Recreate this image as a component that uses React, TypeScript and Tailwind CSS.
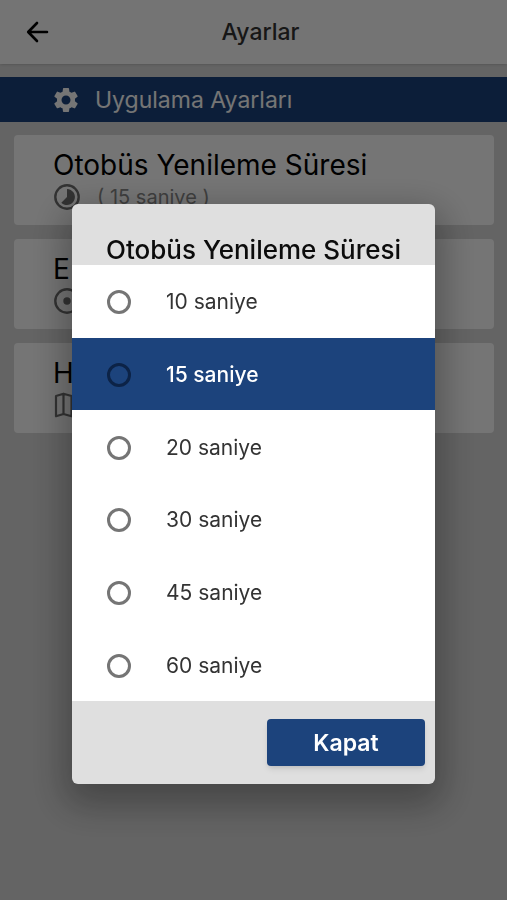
import React, { useState } from 'react';
import { MdSettings } from 'react-icons/md';

const options = [10, 15, 20, 30, 45, 60];

function ArrowIcon() {
  return (
    <svg viewBox="0 0 24 24" className="w-6 h-6" fill="none" stroke="currentColor" strokeWidth="2.6" strokeLinecap="round" strokeLinejoin="round">
      <path d="M22 12H4M12 3L3.200 12l8.800 9" />
    </svg>
  );
}

function TimelapseIcon() {
  return (
    <svg viewBox="0 0 28 28" className="w-7 h-7" fill="none">
      <circle cx="14" cy="14" r="11.700" stroke="currentColor" strokeWidth="2.4" />
      <path d="M14 6a8 8 0 1 1-5.700 13.700L14 14z" fill="currentColor" />
    </svg>
  );
}

function AdjustIcon() {
  return (
    <svg viewBox="0 0 28 28" className="w-7 h-7" fill="none">
      <circle cx="14" cy="14" r="11.700" stroke="currentColor" strokeWidth="2.4" />
      <circle cx="14" cy="14" r="3.700" fill="currentColor" />
    </svg>
  );
}

function MapIcon() {
  return (
    <svg viewBox="0 0 28 28" className="w-7 h-7" fill="none" stroke="currentColor" strokeWidth="2.2" strokeLinejoin="round">
      <path d="M3 5l7.500-2.300 8 2.300L26 2.700v20.300l-7.500 2.300-8-2.300L3 25.300zM10.500 2.700v20.300M18.500 5v20.300" />
    </svg>
  );
}

function SettingCard({ title, icon, value }: { title: string; icon: React.ReactNode; value?: string }) {
  return (
    <div className="bg-white rounded min-h-[90px] pl-[39px] pt-3">
      <h2 className="text-[28px] leading-9 text-black">{title}</h2>
      <div className="flex items-center gap-4 h-7 text-[#6f6f6f]">
        {icon}
        {value && <span className="text-[20px] leading-7 text-[#8a8a8a]">{value}</span>}
      </div>
    </div>
  );
}

export default function App() {
  const [selected, setSelected] = useState(15);
  const [open, setOpen] = useState(true);

  return (
    <div className="min-h-screen bg-[#dadada] font-['Inter','Liberation_Sans',sans-serif]">
      <header className="grid grid-cols-[52px_1fr_38px] items-center h-16 bg-[#fdfdfd] shadow">
        <button aria-label="Geri" className="flex justify-end pr-[3px] text-black">
          <ArrowIcon />
        </button>
        <h1 className="text-center text-[23px] leading-8 font-medium text-[#333]">Ayarlar</h1>
      </header>

      <main className="pt-[13px]">
        <div className="flex items-center gap-[14px] h-[45px] pl-[51px] bg-[#1c437c] text-white">
          <MdSettings className="w-[30px] h-[30px]" />
          <h2 className="text-[23px] leading-8">Uygulama Ayarları</h2>
        </div>

        <div className="flex flex-col gap-[14px] pl-[14px] pr-[13px] pt-[13px]">
          <SettingCard title="Otobüs Yenileme Süresi" icon={<TimelapseIcon />} value="( 15 saniye )" />
          <SettingCard title="E" icon={<AdjustIcon />} />
          <SettingCard title="H" icon={<MapIcon />} />
        </div>
      </main>

      {open && (
        <div className="fixed inset-0 flex items-center justify-center px-[72px] pt-[88px] bg-black/54">
          <div
            role="dialog"
            aria-labelledby="dialog-title"
            className="w-full rounded-md overflow-hidden bg-[#dfdfdf] shadow-[0_14px_36px_8px_rgba(0,0,0,0.3)]"
          >
            <h2 id="dialog-title" className="pl-[34px] pt-[31px] text-[26px] leading-[30px] font-medium text-[#0c0c0c] whitespace-nowrap">
              Otobüs Yenileme Süresi
            </h2>

            <div className="grid auto-rows-fr min-h-[436px] bg-white">
              {options.map((sec) => (
                <label
                  key={sec}
                  className={`flex items-center gap-[35px] pl-[35px] pt-0.5 text-[21px] leading-7 ${
                    selected === sec ? 'bg-[#1c437c] text-white font-medium' : 'text-[#333]'
                  }`}
                >
                  <input
                    type="radio"
                    name="interval"
                    value={sec}
                    checked={selected === sec}
                    onChange={() => setSelected(sec)}
                    className={`appearance-none w-6 h-6 rounded-full border-[3px] ${
                      selected === sec ? 'border-[#0c2347]' : 'border-[#757575]'
                    }`}
                  />
                  {sec} saniye
                </label>
              ))}
            </div>

            <div className="flex justify-end pt-[18px] pr-[10px] pb-[18px]">
              <button
                onClick={() => setOpen(false)}
                className="w-[158px] h-[47px] rounded bg-[#1c437c] text-white text-[23px] leading-8 font-semibold shadow-md"
              >
                Kapat
              </button>
            </div>
          </div>
        </div>
      )}
    </div>
  );
}
